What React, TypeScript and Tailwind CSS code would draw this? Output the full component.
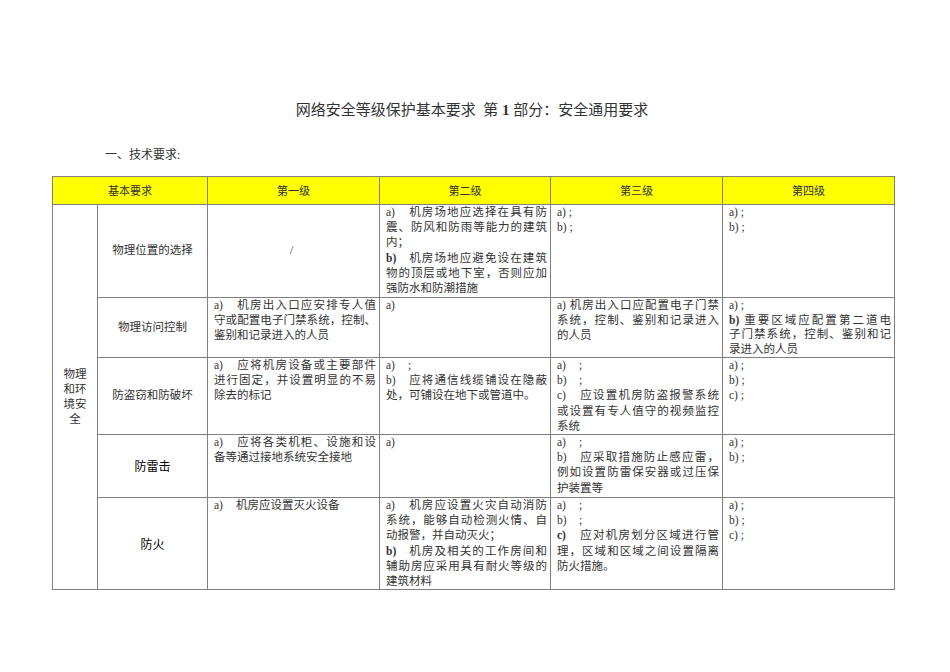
import React from 'react';

type LineProps = { children: React.ReactNode; full?: boolean };

// one printed line of a cell; full lines are stretched edge to edge like the Word source
function Line({ children, full }: LineProps) {
  return (
    <div className={full ? 'text-justify [text-align-last:justify]' : ''}>
      {children}
    </div>
  );
}

function Tag({ children, bold }: { children: React.ReactNode; bold?: boolean }) {
  return (
    <span className={`inline-block w-[22px] ${bold ? 'font-bold' : ''}`}>
      {children}
    </span>
  );
}

const cell = 'border border-[#808080] align-top pl-[6px] pr-[3px] pt-0';
const nameCell = 'border border-[#808080] text-center align-middle';
const headCell =
  "border border-[#808080] text-center align-middle font-normal text-[11px] text-[#333] font-['Noto_Sans_CJK_SC',sans-serif]";

function Short({ items }: { items: string[] }) {
  return (
    <>
      {items.map((i) => (
        <Line key={i}>{i}) ;</Line>
      ))}
    </>
  );
}

export default function App() {
  return (
    <div className="min-h-[672px] w-[950px] bg-white pt-[99px] font-['Liberation_Serif','Noto_Sans_CJK_SC',serif] text-[#333]">
      <h1 className="pr-[6px] text-center text-[15px] leading-[22px] text-[#333]">
        网络安全等级保护基本要求&nbsp; 第 <span className="font-bold">1</span> 部分：安全通用要求
      </h1>
      <p className="ml-[105px] mt-[25px] text-[12px] leading-[18px]">一、技术要求:</p>

      <table className="ml-[52px] mt-[12px] w-[842px] table-fixed border-collapse text-[11.5px] leading-[15.2px] text-[#333]">
        <colgroup>
          <col className="w-[45px]" />
          <col className="w-[110px]" />
          <col className="w-[172px]" />
          <col className="w-[171px]" />
          <col className="w-[172px]" />
          <col className="w-[172px]" />
        </colgroup>
        <thead>
          <tr className="h-[28px] bg-[#ffff00]">
            <th colSpan={2} className={headCell}>
              基本要求
            </th>
            <th className={headCell}>第一级</th>
            <th className={headCell}>第二级</th>
            <th className={headCell}>第三级</th>
            <th className={headCell}>第四级</th>
          </tr>
        </thead>
        <tbody>
          <tr className="h-[93px]">
            <td rowSpan={5} className="border border-[#808080] px-[8px] text-center align-middle leading-[15px]">
              物理和环境安全
            </td>
            <td className={nameCell}>物理位置的选择</td>
            <td className={`${nameCell} pr-[4px]`}>/</td>
            <td className={cell}>
              <Line full>
                <Tag>a)</Tag>机房场地应选择在具有防
              </Line>
              <Line full>震、防风和防雨等能力的建筑</Line>
              <Line>内；</Line>
              <Line full>
                <Tag bold>b)</Tag>机房场地应避免设在建筑
              </Line>
              <Line full>物的顶层或地下室，否则应加</Line>
              <Line>强防水和防潮措施</Line>
            </td>
            <td className={cell}>
              <Short items={['a', 'b']} />
            </td>
            <td className={cell}>
              <Short items={['a', 'b']} />
            </td>
          </tr>

          <tr className="h-[60px]">
            <td className={nameCell}>物理访问控制</td>
            <td className={cell}>
              <Line full>
                <Tag>a)</Tag>机房出入口应安排专人值
              </Line>
              <Line full>守或配置电子门禁系统，控制、</Line>
              <Line>鉴别和记录进入的人员</Line>
            </td>
            <td className={cell}>
              <Line>a)</Line>
            </td>
            <td className={cell}>
              <Line full>a) 机房出入口应配置电子门禁</Line>
              <Line full>系统，控制、鉴别和记录进入</Line>
              <Line>的人员</Line>
            </td>
            <td className={`${cell} leading-[14.7px]`}>
              <Line>a) ;</Line>
              <Line full>
                <span className="font-bold">b)</span> 重要区域应配置第二道电
              </Line>
              <Line full>子门禁系统，控制、鉴别和记</Line>
              <Line>录进入的人员</Line>
            </td>
          </tr>

          <tr className="h-[77px]">
            <td className={nameCell}>防盗窃和防破坏</td>
            <td className={cell}>
              <Line full>
                <Tag>a)</Tag>应将机房设备或主要部件
              </Line>
              <Line full>进行固定，并设置明显的不易</Line>
              <Line>除去的标记</Line>
            </td>
            <td className={cell}>
              <Line>
                <Tag>a)</Tag>;
              </Line>
              <Line full>
                <Tag>b)</Tag>应将通信线缆铺设在隐蔽
              </Line>
              <Line>处，可铺设在地下或管道中。</Line>
            </td>
            <td className={cell}>
              <Line>
                <Tag>a)</Tag>;
              </Line>
              <Line>
                <Tag>b)</Tag>;
              </Line>
              <Line full>
                <Tag>c)</Tag>应设置机房防盗报警系统
              </Line>
              <Line full>或设置有专人值守的视频监控</Line>
              <Line>系统</Line>
            </td>
            <td className={cell}>
              <Short items={['a', 'b', 'c']} />
            </td>
          </tr>

          <tr className="h-[63px]">
            <td className={`${nameCell} font-['Noto_Sans_CJK_SC',sans-serif] text-[12px] text-black`}>防雷击</td>
            <td className={cell}>
              <Line full>
                <Tag>a)</Tag>应将各类机柜、设施和设
              </Line>
              <Line>备等通过接地系统安全接地</Line>
            </td>
            <td className={cell}>
              <Line>a)</Line>
            </td>
            <td className={cell}>
              <Line>
                <Tag>a)</Tag>;
              </Line>
              <Line full>
                <Tag>b)</Tag>应采取措施防止感应雷，
              </Line>
              <Line full>例如设置防雷保安器或过压保</Line>
              <Line>护装置等</Line>
            </td>
            <td className={cell}>
              <Short items={['a', 'b']} />
            </td>
          </tr>

          <tr className="h-[92px]">
            <td className={`${nameCell} font-['Noto_Sans_CJK_SC',sans-serif] text-[12px] text-black`}>防火</td>
            <td className={cell}>
              <Line>
                <Tag>a)</Tag>机房应设置灭火设备
              </Line>
            </td>
            <td className={cell}>
              <Line full>
                <Tag>a)</Tag>机房应设置火灾自动消防
              </Line>
              <Line full>系统，能够自动检测火情、自</Line>
              <Line>动报警，并自动灭火；</Line>
              <Line full>
                <Tag bold>b)</Tag>机房及相关的工作房间和
              </Line>
              <Line full>辅助房应采用具有耐火等级的</Line>
              <Line>建筑材料</Line>
            </td>
            <td className={cell}>
              <Line>
                <Tag>a)</Tag>;
              </Line>
              <Line>
                <Tag>b)</Tag>;
              </Line>
              <Line full>
                <Tag bold>c)</Tag>应对机房划分区域进行管
              </Line>
              <Line full>理，区域和区域之间设置隔离</Line>
              <Line>防火措施。</Line>
            </td>
            <td className={cell}>
              <Short items={['a', 'b', 'c']} />
            </td>
          </tr>
        </tbody>
      </table>
    </div>
  );
}
